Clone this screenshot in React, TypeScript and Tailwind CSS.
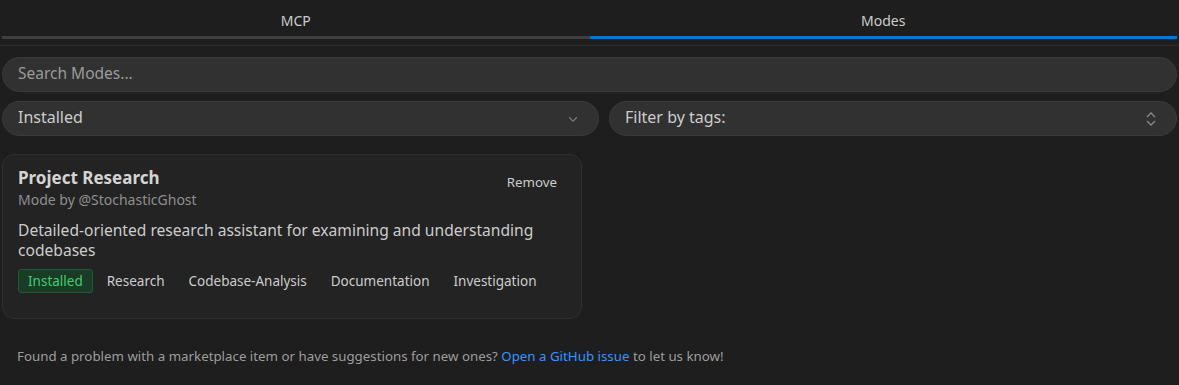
import React from "react";

export default function App() {
  const tags = ["Research", "Codebase-Analysis", "Documentation", "Investigation"];
  return (
    <div
      className="w-[1179px] h-[385px] bg-[#1e1e1e] text-[#cccccc] overflow-hidden"
      style={{ fontFamily: '"Noto Sans", "Open Sans", sans-serif' }}
    >
      <div className="px-[2px]">
        <div className="flex">
          <div className="flex-1 flex flex-col items-center">
            <div className="h-[36px] flex items-center text-[14px] text-[#cccccc] pt-[5px]">MCP</div>
            <div className="w-full h-[3px] bg-[#3f3f3f]" />
          </div>
          <div className="flex-1 flex flex-col items-center">
            <div className="h-[36px] flex items-center text-[14px] text-[#cccccc] pt-[5px]">Modes</div>
            <div className="w-full h-[3px] bg-[#0078d4]" />
          </div>
        </div>
      </div>
      <div className="mt-[6px] h-px bg-[#2b2b2b]" />
      <div className="px-[2px] pt-[11px] flex flex-col gap-[9px]">
        <div className="h-[35px] rounded-full bg-[#313131] border border-[#3a3a3a] flex items-center px-[15px] pb-[2px] text-[15.5px] text-[#9a9a9a]">
          Search Modes...
        </div>
        <div className="flex gap-[10px]">
          <div className="w-[597px] h-[35px] rounded-full bg-[#313131] border border-[#3a3a3a] flex items-center justify-between pl-[15px] pr-[18px] text-[16px] text-[#cccccc]">
            <span className="pb-[3px]">Installed</span>
            <svg width="14" height="14" viewBox="0 0 16 16" fill="none" stroke="#7a7a7a" strokeWidth="1.3">
              <path d="M3.5 6l4.5 4.5L12.5 6" />
            </svg>
          </div>
          <div className="flex-1 h-[35px] rounded-full bg-[#313131] border border-[#3a3a3a] flex items-center justify-between pl-[15px] pr-[18px] text-[16px] text-[#cccccc]">
            <span className="pb-[3px]">Filter by tags:</span>
            <svg width="14" height="18" viewBox="0 0 14 18" fill="none" stroke="#8a8a8a" strokeWidth="1.3">
              <path d="M3 7l4-4 4 4" />
              <path d="M3 11l4 4 4-4" />
            </svg>
          </div>
        </div>
        <div className="mt-[9px] w-[580px] h-[165px] rounded-[12px] bg-[#232323] border border-[#2f2f2f] pl-[15px] pr-[24px] pt-[11px]">
          <div className="flex justify-between items-start">
            <div>
              <div className="text-[17px] font-bold text-[#d4d4d4] leading-[24px]">Project Research</div>
              <div className="text-[14px] text-[#8f8f8f] leading-[20px]">Mode by @StochasticGhost</div>
            </div>
            <div className="text-[13.3px] text-[#cccccc] mt-[7px]">Remove</div>
          </div>
          <div className="mt-[10px] text-[15.6px] text-[#cccccc] leading-[20px]">
            Detailed-oriented research assistant for examining and understanding
            <br />
            codebases
          </div>
          <div className="mt-[9px] flex items-center gap-[4px] text-[13.5px]">
            <span className="h-[24px] px-[9px] flex items-center rounded-[3px] bg-[#1a3b26] border border-[#235a36] text-[#3fcf6f]">
              Installed
            </span>
            {tags.map((t) => (
              <span key={t} className="px-[10px] text-[#cccccc]">
                {t}
              </span>
            ))}
          </div>
        </div>
      </div>
      <div className="pl-[17px] mt-[28px] text-[13.3px] text-[#9d9d9d]">
        Found a problem with a marketplace item or have suggestions for new ones?{" "}
        <span className="text-[#3794ff]">Open a GitHub issue</span> to let us know!
      </div>
    </div>
  );
}
